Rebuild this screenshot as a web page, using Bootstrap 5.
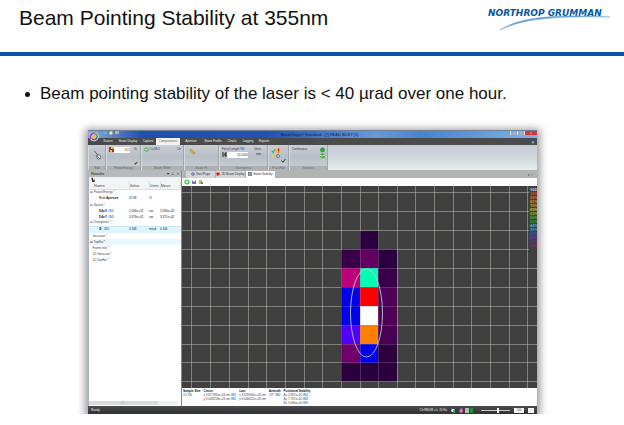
<!DOCTYPE html>
<html lang="en">
<head>
<meta charset="utf-8">
<meta name="viewport" content="width=device-width, initial-scale=1">
<title>Beam Pointing Stability at 355nm</title>
<link rel="stylesheet" href="https://cdn.jsdelivr.net/npm/bootstrap@5.3.0/dist/css/bootstrap.min.css">
<style>
body{font-family:"Liberation Sans",Arial,sans-serif;color:#111;background:#fff}
.slide-head{height:56px;padding:6px 14px 0 19px;border-bottom:4px solid #0757a6}
.slide-head h1{font-size:21px;line-height:24px}
.brand-mark{width:124px;height:26px}
.points{padding:28px 24px 0 24px;font-size:17px;line-height:20px}
.points li{list-style:none}
.points li::before{content:"";flex:none;width:5px;height:5px;border-radius:50%;background:#111;margin:0 10px 0 1px}
.app{margin:26px 87px 0 88px;font-size:3px;line-height:5px;color:#333;background:#fff;box-shadow:0 2px 8px 3px rgba(0,0,0,.4)}
.app button,.app input{font-size:3px;line-height:5px;border:0;padding:0;margin:0;background:none;color:inherit;border-radius:0}
.title-bar{height:8px;background:linear-gradient(90deg,#93a9d0,#2050ae 12%,#2352b0 40%,#4f83cb 56%,#6c9ad5 64%,#4883cc 74%,#80b2e2 100%);border-top:1px solid #71809c;color:#112144}
.title-text{font-size:4px;line-height:7px;padding-left:14px}
.win-btns button{width:7px;height:4px;line-height:3px;color:#fff;background:#93adc9;border-left:1px solid #d4e2ee}
.win-btns .close-btn{width:13px;background:#cf3b38}
.menu-bar{height:7px;background:#4b4b4b;padding-left:12px}
.menu-bar button{color:#eee;height:7px;white-space:nowrap;text-align:center}
.menu-bar .on{background:#f1f2f4;color:#666}
.menu-bar .help-btn{color:#6aa0f0;font-size:6px;width:8px;line-height:6px}
.w16{width:16px}.w22{width:22px}.w24{width:24px}
.ribbon{height:25px;background:linear-gradient(#c5c9d5,#d2dadd 55%,#e4efed)}
.grp{background:linear-gradient(#cbced4,#b8bec7 45%,#c9d0d2);border-right:1px solid #a1a5aa;border-left:1px solid #d7d9df}
.grp svg{height:20px;width:100%;display:block}
.grp .fields{height:21px;padding:2px 2px 0}
.grp .caption-strip{height:4px;line-height:4px;background:#aeb1b3;color:#686868;text-align:center;overflow:hidden}
.g1{width:18px}.g2,.g4{width:35px}.g3{width:43px}.g5{width:49px}.g6{width:21px}.g7{width:39px}
.grp input{background:#fff;height:6px;text-align:right}
.in-a{width:16px}.in-b{width:21px}
.grp .ico{width:5px;height:5px;flex:none}
.tick{font-size:5px;color:#222}
.side{width:94px;border-right:1px solid #888;border-left:1px solid #a8b1c6}
.side-head{height:7px;line-height:7px;background:#b7babd;color:#111;padding:0 2px}
.side-head span{font-size:4px}
.side-tool{height:5px;background:#f2f3f4}
.side-tool svg{width:6px;height:5px;display:block;margin-left:1px}
.results{width:100%;table-layout:fixed;border-collapse:collapse;color:#444}
.results th,.results td{padding:0;height:6px;line-height:5px;white-space:nowrap;overflow:hidden;font-weight:400;vertical-align:middle}
.results thead th{height:7px;font-size:4px;background:#f3f4f5;border-right:1px solid #e0e0e0;border-bottom:1px solid #ddd}
.results thead th:first-child{padding-left:5px}
.results .kid td{color:#222}
.results .kid td:first-child{padding-left:10px}
.results .gr td{padding-left:1px}
.results .tall td{height:7px}
.results .hot td{background:#e0f4fd;border-top:1px solid #c5eaf8;height:7px}
.results .hot2 td{background:#e9f8fe}
.tag{color:#1686e2;font-weight:700}
.c1{width:40px}.c2{width:20px}.c3{width:11px}
.hscroll{height:4px;margin:auto 3px 1px 0;background:#d8dadd;border-right:20px solid #eceeef;color:#777;text-align:center;line-height:3px}
.tabs{height:8px;background:#b2b4b3;padding-left:4px}
.tabs button{height:7px;width:30px;white-space:nowrap;background:#d3d5d8;border-right:1px solid #b2b4b3}
.tabs .on{background:#fff}
.tabs svg{width:4px;height:4px;vertical-align:middle;margin-right:1px}
.plot-tool{height:8px;padding:1px 2px}
.plot-tool svg{width:22px;height:6px;display:block}
.plot{display:block;width:100%;height:auto}
.stats{height:18px;padding:1px 1px 0}
.stats table{color:#444;line-height:4px}
.stats th{color:#111}.stats th,.stats td{padding:0 3px 0 0;white-space:nowrap;vertical-align:top}
.status{height:8px;background:linear-gradient(#4a4b4e,#303134);color:#eee;padding:0 3px}
.status .ico{width:22px;height:5px}
.status .btn-w{width:10px;height:5px;background:#f6f6f6;color:#555}
.status .btn-n{width:6px}
.zoom-in{appearance:none;width:29px;height:5px}
.status .zoom-in{background:linear-gradient(#ccc,#ccc) center/100% 1px no-repeat}
.zoom-in::-webkit-slider-thumb{appearance:none;width:2px;height:5px;background:#fff}
.orb{left:1px;top:0;width:10px;height:12px}
.quick{left:15px;top:0;width:18px;height:5px}
</style>
<script src="https://cdn.jsdelivr.net/npm/bootstrap@5.3.0/dist/js/bootstrap.bundle.min.js"></script>
</head>
<body>
<header class="slide-head d-flex justify-content-between align-items-start">
  <h1 class="fw-normal m-0 text-nowrap">Beam Pointing Stability at 355nm</h1>
  <svg class="brand-mark flex-shrink-0" viewBox="0 0 124 26" role="img" aria-label="Northrop Grumman">
    <text x="2" y="10" font-family="DejaVu Sans,sans-serif" font-size="9" font-weight="bold" font-style="italic" fill="#0757a6">NORTHROP GRUMMAN</text>
    <path d="M14 24C33 12 61 8 124 11C66 10 37 13 14 24Z" fill="#5d9bd0" stroke="#6fa6d6" stroke-width=".5"/>
  </svg>
</header>
<main>
<ul class="points m-0"><li class="d-flex align-items-center">Beam pointing stability of the laser is &lt; 40 µrad over one hour.</li></ul>

<section class="app position-relative" aria-label="Beam analyzer window">
  <div class="title-bar d-flex justify-content-center position-relative">
    <span class="title-text">BeamGage® Standard - [*] READ BUSY [5]</span>
    <div class="win-btns d-flex position-absolute top-0 end-0"><button aria-label="Minimize">–</button><button aria-label="Restore">▫</button><button class="close-btn" aria-label="Close">×</button></div>
  </div>
  <svg class="quick position-absolute" viewBox="0 0 18 5"><circle cx="2" cy="3" r="1.700" fill="#55b9e5"/><circle cx="8" cy="3" r="1.700" fill="#eee797"/><path d="M12 1h4v3h-4z" fill="#aab5a0"/></svg>
  <nav class="menu-bar d-flex">
    <button class="w16">Source</button><button class="w24">Beam Display</button><button class="w16">Capture</button><button class="w24 on">Computations</button><button class="w22">Aperture</button><button class="w22">Beam Profile</button><button class="w16">Charts</button><button class="w16">Logging</button><button class="w16">Reports</button>
    <button class="help-btn ms-auto" aria-label="Help">●</button>
  </nav>
  <svg class="orb position-absolute" viewBox="0 0 10 12"><circle cx="5" cy="6.500" r="4.800" fill="#d9d9e5"/><path d="M2 9A4 4 0 0 1 5 3" fill="none" stroke="#a54bd0" stroke-width="2"/><path d="M5 3A4 4 0 0 1 8 8" fill="none" stroke="#4dae70" stroke-width="2"/><path d="M8 8A4 4 0 0 1 3 9" fill="none" stroke="#3858d0" stroke-width="1.500"/><circle cx="5" cy="7" r="2" fill="#ffb42f"/></svg>

  <div class="ribbon d-flex">
    <div class="grp g1"><div class="fields"><svg viewBox="0 0 14 20"><path d="M4 3l4 5-1 1" fill="none" stroke="#435780" stroke-width="1"/><circle cx="9" cy="10" r="2.500" fill="#dce3ea" stroke="#555" stroke-width=".8"/><path d="M6 8l4 4" stroke="#444" stroke-width=".8"/></svg></div><div class="caption-strip">Edit</div></div>
    <div class="grp g2"><div class="fields d-flex flex-column"><div class="d-flex"><svg class="ico" viewBox="0 0 5 5"><path fill="#a42e2a" d="M0 0h5v5H0z"/><path d="M2 0h3v2H2zM1 3h2v2H1z" fill="#f7b633"/></svg><input class="in-a" id="clip" value="13.5"><label class="ms-1" for="clip">%</label></div><div class="tick mt-auto text-end">✔</div></div><div class="caption-strip">Power/Energy</div></div>
    <div class="grp g3"><div class="fields d-flex align-items-start"><svg class="ico" viewBox="0 0 5 5"><circle cx="2.500" cy="2.500" r="1.800" fill="none" stroke="#43b649"/></svg><span class="text-success">Clip</span><span class="tag">86.5</span><span class="ms-auto">On</span></div><div class="caption-strip">Beam Width</div></div>
    <div class="grp g4"><div class="fields"><svg viewBox="0 0 31 20"><path d="M3 2l2 0 4 4-2 1-3-3z" fill="#e5ac2c" stroke="#8f7743" stroke-width=".5"/></svg></div><div class="caption-strip">Beam Fit</div></div>
    <div class="grp g5"><div class="fields"><div class="d-flex"><span>Focal Length <span class="tag">RD</span></span><span class="ms-auto me-1">Units</span></div><div class="d-flex"><svg class="ico" viewBox="0 0 5 5"><path d="M1 0v5M4 0v5M4 1L2 2.500 4 4" fill="none" stroke="#222"/></svg><input class="in-b" id="focal" value="50.0000"><label class="ms-auto me-1" for="focal">mm</label></div></div><div class="caption-strip">Divergence</div></div>
    <div class="grp g6"><div class="fields"><svg viewBox="0 0 17 20"><path d="M1 3l1.500 2L5 1" fill="none" stroke="#42b747" stroke-width="1.200"/><rect x="6" y="0" width="5" height="6" rx="1" fill="#f8c474"/><path d="M8.500 .5v3M8.500 4v1" stroke="#d81f16" stroke-width="1.800"/><circle cx="2" cy="9" r="1.600" fill="#ead33b"/><circle cx="8" cy="9" r="1.800" fill="none" stroke="#6e7b77"/><circle cx="14" cy="9" r="1.900" fill="#b8d9e1" stroke="#67b7cb" stroke-width=".5"/><path d="M12 14l1.500 2 3-4" fill="none" stroke="#222"/></svg></div><div class="caption-strip">Pass/Fail</div></div>
    <div class="grp g7"><div class="fields d-flex justify-content-between"><span>Continuous</span><svg class="ico h-auto" viewBox="0 0 5 18"><circle cx="2.500" cy="2.500" r="2.400" fill="#329d46"/><circle cx="2.500" cy="8.500" r="2.400" fill="#40ac41"/><path d="M0 8h2v2M3 8h2" fill="none" stroke="#f4d94c"/></svg></div><div class="caption-strip">Statistics</div></div>
  </div>

  <div class="d-flex">
    <aside class="side flex-shrink-0 d-flex flex-column">
      <div class="side-head d-flex justify-content-between"><span>Results</span><span>▾ &nbsp;⊥ &nbsp;×</span></div>
      <div class="side-tool"><svg viewBox="0 0 6 6"><path d="M1 1h2v2h2v3H2z" fill="#333"/><path d="M3 3h1v1H3z" fill="#fff"/></svg></div>
      <table class="results">
        <colgroup><col class="c1"><col class="c2"><col class="c3"><col></colgroup>
        <thead><tr><th>Name</th><th>Value</th><th>Units</th><th>Mean</th></tr></thead>
        <tbody>
        <tr class="gr"><td colspan="4">⊟ Power/Energy *</td></tr>
        <tr class="kid tall"><td><b>% in Aperture</b></td><td>47.68</td><td>%</td><td></td></tr>
        <tr class="gr"><td colspan="4">⊟ Spatial *</td></tr>
        <tr class="kid"><td><b>D4σX</b> &nbsp;<span class="tag">ISO</span></td><td>2.084e+02</td><td>um</td><td>2.084e+02</td></tr>
        <tr class="kid"><td><b>D4σY</b> &nbsp;<span class="tag">ISO</span></td><td>3.379e+02</td><td>um</td><td>3.371e+02</td></tr>
        <tr class="gr"><td colspan="4">⊟ Divergence *</td></tr>
        <tr class="kid hot"><td><b>Φ</b> &nbsp; <span class="tag">ISO</span></td><td>0.168</td><td>mrad</td><td>0.166</td></tr>
        <tr class="gr"><td colspan="4">&nbsp; &nbsp;Gaussian *</td></tr>
        <tr class="gr hot2"><td colspan="4">⊞ TopHat *</td></tr>
        <tr class="gr"><td colspan="4">&nbsp; &nbsp;Frame Info *</td></tr>
        <tr class="gr"><td colspan="4">&nbsp; &nbsp;1D Gaussian *</td></tr>
        <tr class="gr"><td colspan="4">&nbsp; &nbsp;1D TopHat *</td></tr>
        </tbody>
      </table>
      <div class="hscroll">≡</div>
    </aside>
    <div class="flex-grow-1">
      <div class="tabs d-flex align-items-end">
        <button><svg viewBox="0 0 4 4"><circle cx="2" cy="2" r="1.800" fill="#5662c8"/><circle cx="2" cy="2" r=".8" fill="#fbc75d"/></svg>Start Page</button><button><svg viewBox="0 0 4 4"><circle cx="2" cy="2" r="1.800" fill="#df241d"/></svg>2D Beam Display</button><button class="on"><svg viewBox="0 0 4 4"><path d="M0 0h4v4H0z" fill="#777"/><path d="M2 0v4M0 2h4" stroke="#ccc" stroke-width=".5"/></svg>Beam Stability</button><span class="ms-auto me-1">▾ ×</span>
      </div>
      <div class="plot-tool"><svg viewBox="0 0 22 6"><circle cx="3" cy="3" r="2" fill="#eaffeb" stroke="#27b536" stroke-width="1.200"/><path d="M8 1v4h4V1l-2 2z" fill="#7777b7"/><path d="M15 1h3v4h-3z" fill="#d0b461"/><path d="M17 3h2v2h-2z" fill="#777"/></svg></div>
      <svg class="plot" viewBox="182 185 355 202" role="img" aria-label="Beam position histogram">
        <path fill="#404040" d="M182 185h355v202H182z"/>
        <g shape-rendering="crispEdges">
          <path fill="#2b003f" d="M360 230h18v19h-18zM378 249h19v38h-19zM378 362h19v19h-19zM341 362h37v19h-37z"/>
          <path fill="#390049" d="M341 249h19v18h-19zM378 267h19v19h-19z"/>
          <path fill="#620062" d="M360 249h18v18h-18z"/>
          <path fill="#bd0079" d="M341 267h19v19h-19z"/>
          <path fill="#00ffb3" d="M360 267h18v19h-18z"/>
          <path fill="#500057" d="M378 286h19v38h-19z"/>
          <path fill="#470052" d="M378 324h19v19h-19z"/>
          <path fill="#2b003b" d="M378 343h19v19h-19z"/>
          <path fill="#0000eb" d="M341 286h19v38h-19zM360 343h18v19h-18z"/>
          <path fill="#f00" d="M360 286h18v19h-18z"/>
          <path fill="#fff" d="M360 305h18v19h-18z"/>
          <path fill="#5000ff" d="M341 324h19v19h-19z"/>
          <path fill="#ff8000" d="M360 324h18v19h-18z"/>
          <path fill="#70006c" d="M341 343h19v19h-19z"/>
        </g>
        <path fill="none" stroke="#d0d0c5" stroke-opacity=".65" stroke-width=".7" d="M191.500 185v202M210.500 185v202M229.500 185v202M248.500 185v202M266.500 185v202M285.500 185v202M304.500 185v202M322.500 185v202M341.500 185v64M341.500 381v6M360.500 185v45M360.500 381v6M378.500 185v45M378.500 381v6M397.500 185v202M415.500 185v202M434.500 185v202M453.500 185v202M471.500 185v202M490.500 185v202M509.500 185v202M527.500 185v202M182 191.500h355M182 210.500h355M182 229.500h355M182 248.500h159M397 248.500h140M182 267.500h159M397 267.500h140M182 286.500h159M397 286.500h140M182 305.500h159M397 305.500h140M182 324.500h159M397 324.500h140M182 343.500h159M397 343.500h140M182 361.500h159M397 361.500h140M182 380.500h355"/>
        <path fill="none" stroke="#a487ac" stroke-opacity=".5" stroke-width=".6" d="M341.500 249v132M360.500 230v151M378.500 230v151M341 248.500h56M341 267.500h56M341 286.500h56M341 305.500h56M341 324.500h56M341 343.500h56M341 361.500h56"/>
        <ellipse cx="366.500" cy="312" rx="16" ry="44" fill="none" stroke="#b7c7dc" stroke-width=".9"/>
        <path fill="#404040" d="M529 186h8v64h-8z"/>
        <g font-family="Liberation Sans,Arial,sans-serif" font-size="4" font-weight="bold">
          <text x="530" y="190" fill="#ddd">100</text><text x="530" y="194" fill="#d94a20">94%</text><text x="530" y="198" fill="#e26420">88%</text><text x="530" y="202" fill="#e68e23">81%</text><text x="530" y="206" fill="#d6aa22">75%</text><text x="530" y="210" fill="#cec824">69%</text><text x="530" y="214" fill="#a8bd22">63%</text><text x="530" y="218" fill="#48b720">56%</text><text x="530" y="222" fill="#20a829">50%</text><text x="530" y="226" fill="#28bdac">44%</text><text x="530" y="230" fill="#269ed8">38%</text><text x="530" y="234" fill="#3656bb">31%</text><text x="530" y="238" fill="#583da0">25%</text><text x="530" y="242" fill="#6c3184">19%</text><text x="530" y="246" fill="#942869">13%</text>
        </g>
      </svg>
      <div class="stats">
        <table>
          <thead><tr><th>Sample Size</th><th>Center</th><th>Last</th><th>Azimuth</th><th>Positional Stability</th></tr></thead>
          <tbody><tr><td>10,706</td><td>x 3.827380e+03 um <span class="tag">ISO</span><br>y 3.048258e+03 um <span class="tag">ISO</span></td><td>x 3.829900e+03 um<br>y 3.046622e+03 um</td><td>-87° <span class="tag">ISO</span></td><td>Δx 2.887e+00 <span class="tag">ISO</span><br>Δy 7.797e+00 <span class="tag">ISO</span><br>Δs 5.636e+00 <span class="tag">ISO</span></td></tr></tbody>
        </table>
      </div>
    </div>
  </div>

  <footer class="status d-flex align-items-center">
    <span>Ready</span>
    <span class="ms-auto me-1">Ch:NNUM +/+ 15 Hz</span>
    <svg class="ico me-2" viewBox="0 0 22 5"><circle cx="2" cy="2.500" r="1.800" fill="#fff"/><path d="M2 2h2v3H2z" fill="#2bb44c"/><path d="M8 4l2-4 2 2-1 3z" fill="#db79dc"/><path d="M14 0h4v5h-4z" fill="#bbb"/><path d="M19 0h3v5h-3z" fill="#278d32"/></svg>
    <input class="zoom-in" type="range" aria-label="Zoom" min="0" max="100" value="60">
    <button class="btn-w ms-1">100</button><button class="btn-w btn-n ms-1" aria-label="Fit">□</button>
  </footer>
</section>
</main>
</body>
</html>
